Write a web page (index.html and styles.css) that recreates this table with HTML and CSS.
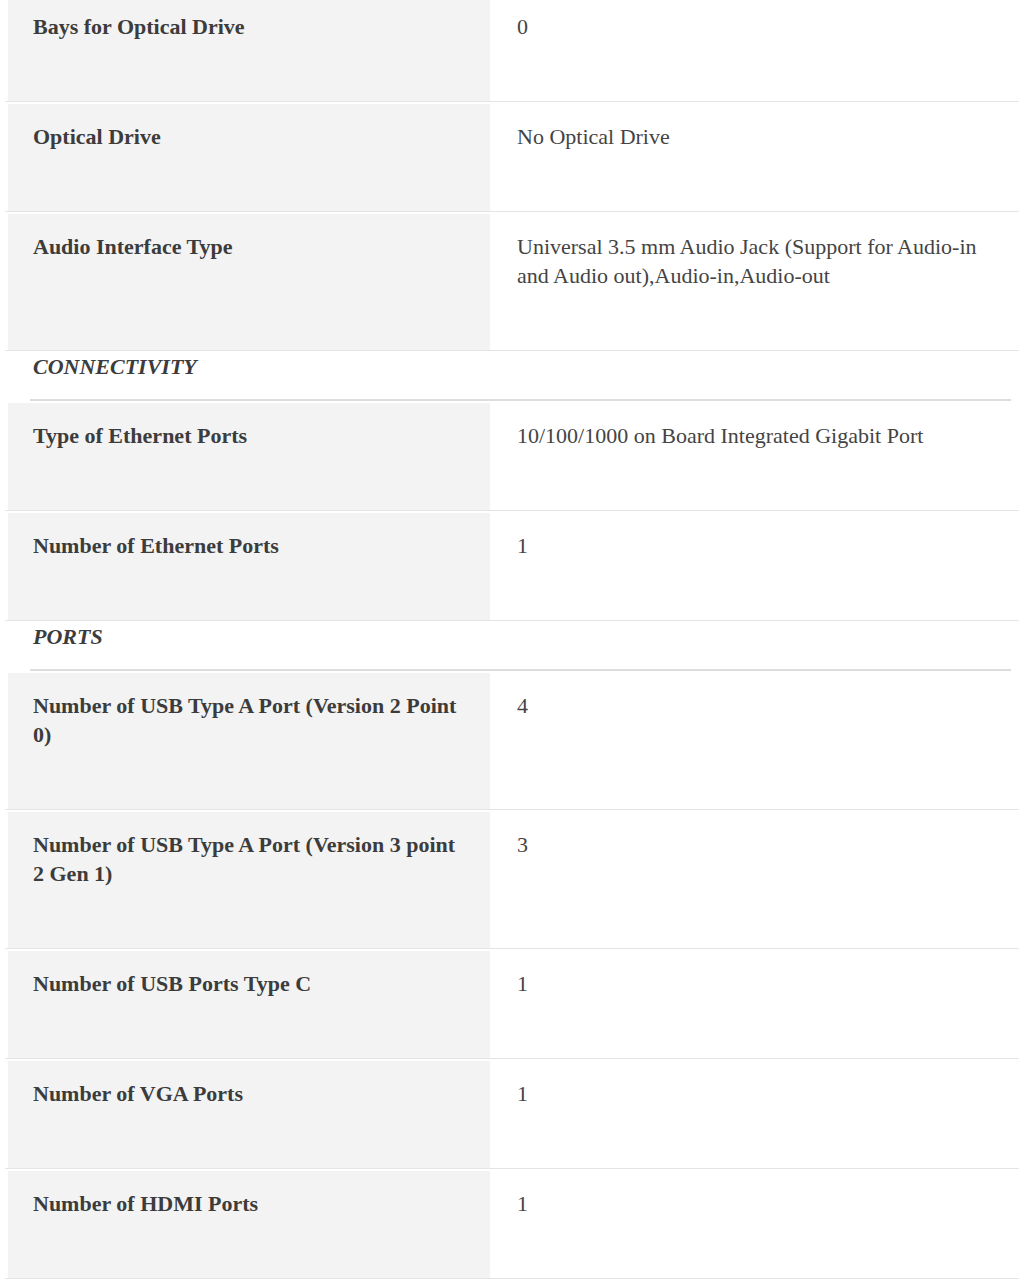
FILE: index.html
```html
<!DOCTYPE html>
<html lang="en">
<head>
<meta charset="utf-8">
<title>Specifications</title>
<link rel="stylesheet" href="styles.css">
</head>
<body>
<div class="specs">
  <div class="row"><div class="label">Bays for Optical Drive</div><div class="value">0</div></div>
  <div class="row"><div class="label">Optical Drive</div><div class="value">No Optical Drive</div></div>
  <div class="row"><div class="label">Audio Interface Type</div><div class="value">Universal 3.5 mm Audio Jack (Support for Audio-in and Audio out),Audio-in,Audio-out</div></div>
  <div class="section"><div class="section-title">CONNECTIVITY</div></div>
  <div class="row"><div class="label">Type of Ethernet Ports</div><div class="value">10/100/1000 on Board Integrated Gigabit Port</div></div>
  <div class="row"><div class="label">Number of Ethernet Ports</div><div class="value">1</div></div>
  <div class="section"><div class="section-title">PORTS</div></div>
  <div class="row"><div class="label">Number of USB Type A Port (Version 2 Point 0)</div><div class="value">4</div></div>
  <div class="row"><div class="label">Number of USB Type A Port (Version 3 point 2 Gen 1)</div><div class="value">3</div></div>
  <div class="row"><div class="label">Number of USB Ports Type C</div><div class="value">1</div></div>
  <div class="row"><div class="label">Number of VGA Ports</div><div class="value">1</div></div>
  <div class="row"><div class="label">Number of HDMI Ports</div><div class="value">1</div></div>
</div>
</body>
</html>
```

FILE: styles.css
```css
html, body {
  margin: 0;
  padding: 0;
  background: #ffffff;
  overflow: hidden;
}

body {
  font-family: "Liberation Serif", "Times New Roman", serif;
  font-size: 22px;
  line-height: 29px;
  color: #404040;
}

.specs {
  margin-top: -8px;
  margin-left: 5px;
}

.row {
  display: grid;
  grid-template-columns: 485px 1fr;
  padding-top: 2px;
  border-bottom: 1px solid #e4e4e4;
}

.label {
  margin-left: 3px;
  background: #f3f3f3;
  font-weight: bold;
  padding: 18px 25px 60px 25px;
  color: #3c3c3c;
}

.value {
  padding: 18px 25px 60px 27px;
  color: #444444;
}

.section {
  padding: 0 8px 0 25px;
}

.section-title {
  font-weight: bold;
  font-style: italic;
  padding: 1px 0 18px 3px;
  border-bottom: 2px solid #dddddd;
  color: #3c3c3c;
}
```
